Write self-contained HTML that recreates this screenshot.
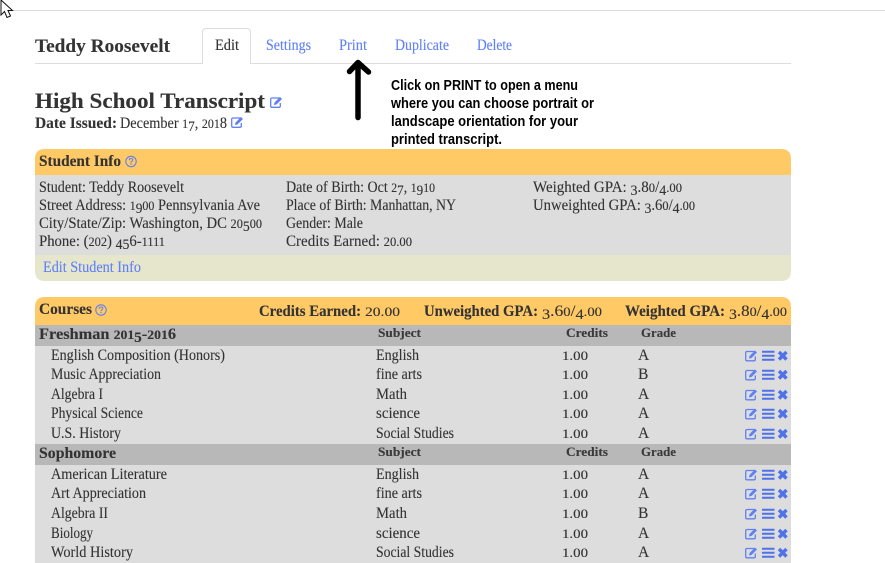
<!DOCTYPE html>
<html><head><meta charset="utf-8"><style>
html,body{margin:0;padding:0;background:#fff;width:885px;height:563px;overflow:hidden}
svg{display:block}
text{font-family:"Liberation Serif",serif;font-size:15.5px;fill:#333;stroke:#333;stroke-width:.12px}
.b{font-weight:bold}
.l{fill:#5f80fa;stroke:#5f80fa}
.h{font-size:13px;font-weight:bold;fill:#3a3a3a}
.t{font-family:"Liberation Sans",sans-serif;font-weight:bold;font-size:14.5px;fill:#000;stroke:none}
.s{font-size:13px}
.d{font-size:14.5px;baseline-shift:-3px}
</style></head><body>
<svg width="885" height="563" viewBox="0 0 885 563" xmlns="http://www.w3.org/2000/svg">
<defs>
<symbol id="e" viewBox="0 0 13 12" overflow="visible">
<path d="M9.500 2H2Q.7 2 .7 3.300V10Q.7 11.300 2 11.300H9Q10.300 11.300 10.300 10V7" fill="none" stroke="#6181f0" stroke-width="1.300"/>
<path d="M4.500 6.500L10 1L12 3L6.500 8.500L4 9Z" fill="#6181f0"/>
</symbol>
<symbol id="q" viewBox="0 0 12 12" overflow="visible">
<circle cx="6" cy="6" r="5.200" fill="none" stroke="#6181f0" stroke-width="1.100"/>
<path d="M4.200 4.700Q4.300 3 6 3Q7.900 3 7.800 4.500Q7.700 5.500 6.600 5.900Q6 6.200 6 7.300" fill="none" stroke="#6181f0" stroke-width="1.100"/>
<rect x="5.400" y="8" width="1.200" height="1.300" fill="#6181f0"/>
</symbol>
<g id="a">
<use href="#e" x="745" y="-5.500" width="13" height="12"/>
<path d="M762 -3.200H774.500M762 .8H774.500M762 4.800H774.500" stroke="#4f72e8" stroke-width="2"/>
<path d="M779 -3L786.500 4.500M786.500 -3L779 4.500" stroke="#4f72e8" stroke-width="3.400"/>
</g>
</defs>

<rect x="0" y="10" width="885" height="1" fill="#ddd"/>

<!-- cursor -->
<path d="M1 0V15L4.500 11.500L7 17.500L10.500 16L8 10.500H12.500Z" fill="#fff" stroke="#111" stroke-width="1"/>

<!-- tabs -->
<rect x="35" y="63" width="756" height="1" fill="#ddd"/>
<path d="M202.500 64V32Q202.500 28.500 206 28.500H247Q250.500 28.500 250.500 32V64" fill="#fff" stroke="#ddd"/>
<rect x="203" y="62" width="47" height="3" fill="#fff"/>
<text class="b" x="35" y="52" style="font-size:18.5px" textLength="135" lengthAdjust="spacingAndGlyphs">Teddy Roosevelt</text>
<text x="215" y="50" textLength="24" lengthAdjust="spacingAndGlyphs">Edit</text>
<text class="l" x="266" y="50" textLength="45" lengthAdjust="spacingAndGlyphs">Settings</text>
<text class="l" x="339" y="50" textLength="28" lengthAdjust="spacingAndGlyphs">Print</text>
<text class="l" x="395" y="50" textLength="54" lengthAdjust="spacingAndGlyphs">Duplicate</text>
<text class="l" x="477" y="50" textLength="35" lengthAdjust="spacingAndGlyphs">Delete</text>

<!-- arrow -->
<path d="M358 63V117.500M349.500 71.500L358 62.500L368.500 72" fill="none" stroke="#000" stroke-width="5.500" stroke-linecap="round" stroke-linejoin="round"/>

<!-- callout -->
<text class="t" x="391" y="90" textLength="187" lengthAdjust="spacingAndGlyphs">Click on PRINT to open a menu</text>
<text class="t" x="391" y="108" textLength="203" lengthAdjust="spacingAndGlyphs">where you can choose portrait or</text>
<text class="t" x="391" y="126" textLength="187" lengthAdjust="spacingAndGlyphs">landscape orientation for your</text>
<text class="t" x="391" y="144" textLength="111" lengthAdjust="spacingAndGlyphs">printed transcript.</text>

<!-- title -->
<text class="b" x="35" y="108" style="font-size:22.5px" textLength="230" lengthAdjust="spacingAndGlyphs">High School Transcript</text>
<use href="#e" x="270" y="96" width="13" height="12"/>
<text class="b" x="35" y="128" textLength="82" lengthAdjust="spacingAndGlyphs">Date Issued:</text>
<text x="120" y="128" textLength="107" lengthAdjust="spacingAndGlyphs">December <tspan class="s">1</tspan><tspan class="d">7</tspan>, <tspan class="s">201</tspan>8</text>
<use href="#e" x="231" y="116" width="13" height="12"/>

<!-- student info -->
<path d="M35 175V159Q35 149 45 149H781Q791 149 791 159V175Z" fill="#ffc966"/>
<rect x="35" y="175" width="756" height="80" fill="#ddd"/>
<path d="M35 255H791V271Q791 281 781 281H45Q35 281 35 271Z" fill="#e6e6cc"/>
<text class="b" x="39" y="166" textLength="82" lengthAdjust="spacingAndGlyphs">Student Info</text>
<use href="#q" x="125" y="155.500" width="12" height="12"/>
<text x="39" y="192" textLength="145" lengthAdjust="spacingAndGlyphs">Student: Teddy Roosevelt</text>
<text x="39" y="210" textLength="221" lengthAdjust="spacingAndGlyphs">Street Address: <tspan class="s">1</tspan><tspan class="d">9</tspan><tspan class="s">00</tspan> Pennsylvania Ave</text>
<text x="39" y="228" textLength="223" lengthAdjust="spacingAndGlyphs">City/State/Zip: Washington, DC <tspan class="s">20</tspan><tspan class="d">5</tspan><tspan class="s">00</tspan></text>
<text x="39" y="246" textLength="126" lengthAdjust="spacingAndGlyphs">Phone: (<tspan class="s">202</tspan>) <tspan class="d">45</tspan>6-<tspan class="s">1111</tspan></text>
<text x="286" y="192" textLength="149" lengthAdjust="spacingAndGlyphs">Date of Birth: Oct <tspan class="s">2</tspan><tspan class="d">7</tspan>, <tspan class="s">1</tspan><tspan class="d">9</tspan><tspan class="s">10</tspan></text>
<text x="286" y="210" textLength="170" lengthAdjust="spacingAndGlyphs">Place of Birth: Manhattan, NY</text>
<text x="286" y="228" textLength="77" lengthAdjust="spacingAndGlyphs">Gender: Male</text>
<text x="286" y="246" textLength="126" lengthAdjust="spacingAndGlyphs">Credits Earned: <tspan class="s">20.00</tspan></text>
<text x="533" y="192" textLength="149" lengthAdjust="spacingAndGlyphs">Weighted GPA: <tspan class="d">3</tspan>.8<tspan class="s">0</tspan>/<tspan class="d">4</tspan><tspan class="s">.00</tspan></text>
<text x="533" y="210" textLength="162" lengthAdjust="spacingAndGlyphs">Unweighted GPA: <tspan class="d">3</tspan>.6<tspan class="s">0</tspan>/<tspan class="d">4</tspan><tspan class="s">.00</tspan></text>
<text class="l" x="43" y="272" textLength="98" lengthAdjust="spacingAndGlyphs">Edit Student Info</text>

<!-- courses -->
<path d="M35 325V307Q35 297 45 297H781Q791 297 791 307V325Z" fill="#ffc966"/>
<rect x="35" y="325" width="756" height="238" fill="#ddd"/>
<rect x="35" y="325" width="756" height="21" fill="#b8b8b8"/>
<rect x="35" y="444" width="756" height="21" fill="#b8b8b8"/>
<text class="b" x="39" y="314" textLength="53" lengthAdjust="spacingAndGlyphs">Courses</text>
<use href="#q" x="95" y="304" width="12" height="12"/>
<text class="b" x="259" y="316" textLength="102" lengthAdjust="spacingAndGlyphs">Credits Earned:</text>
<text x="365" y="316" textLength="35" lengthAdjust="spacingAndGlyphs"><tspan class="s">20.00</tspan></text>
<text class="b" x="424" y="316" textLength="114" lengthAdjust="spacingAndGlyphs">Unweighted GPA:</text>
<text x="542" y="316" textLength="60" lengthAdjust="spacingAndGlyphs"><tspan class="d">3</tspan>.6<tspan class="s">0</tspan>/<tspan class="d">4</tspan><tspan class="s">.00</tspan></text>
<text class="b" x="625" y="316" textLength="100" lengthAdjust="spacingAndGlyphs">Weighted GPA:</text>
<text x="729" y="316" textLength="58" lengthAdjust="spacingAndGlyphs"><tspan class="d">3</tspan>.8<tspan class="s">0</tspan>/<tspan class="d">4</tspan><tspan class="s">.00</tspan></text>

<text class="b" x="39" y="339" textLength="137" lengthAdjust="spacingAndGlyphs">Freshman <tspan class="s">201</tspan><tspan class="d">5</tspan>-<tspan class="s">201</tspan>6</text>
<text class="h" x="378" y="337" textLength="43" lengthAdjust="spacingAndGlyphs">Subject</text>
<text class="h" x="566" y="337" textLength="42" lengthAdjust="spacingAndGlyphs">Credits</text>
<text class="h" x="641" y="337" textLength="35" lengthAdjust="spacingAndGlyphs">Grade</text>

<text x="51" y="360" textLength="174" lengthAdjust="spacingAndGlyphs">English Composition (Honors)</text>
<text x="376" y="360" textLength="43" lengthAdjust="spacingAndGlyphs">English</text>
<text class="s" x="562" y="360" textLength="26" lengthAdjust="spacingAndGlyphs">1.00</text>
<text x="638" y="360">A</text>
<use href="#a" y="355"/>

<text x="51" y="379" textLength="110" lengthAdjust="spacingAndGlyphs">Music Appreciation</text>
<text x="376" y="379" textLength="46" lengthAdjust="spacingAndGlyphs">fine arts</text>
<text class="s" x="562" y="379" textLength="26" lengthAdjust="spacingAndGlyphs">1.00</text>
<text x="638" y="379">B</text>
<use href="#a" y="374"/>

<text x="51" y="399" textLength="52" lengthAdjust="spacingAndGlyphs">Algebra I</text>
<text x="376" y="399" textLength="31" lengthAdjust="spacingAndGlyphs">Math</text>
<text class="s" x="562" y="399" textLength="26" lengthAdjust="spacingAndGlyphs">1.00</text>
<text x="638" y="399">A</text>
<use href="#a" y="394"/>

<text x="51" y="418" textLength="92" lengthAdjust="spacingAndGlyphs">Physical Science</text>
<text x="376" y="418" textLength="44" lengthAdjust="spacingAndGlyphs">science</text>
<text class="s" x="562" y="418" textLength="26" lengthAdjust="spacingAndGlyphs">1.00</text>
<text x="638" y="418">A</text>
<use href="#a" y="413"/>

<text x="51" y="438" textLength="70" lengthAdjust="spacingAndGlyphs">U.S. History</text>
<text x="376" y="438" textLength="78" lengthAdjust="spacingAndGlyphs">Social Studies</text>
<text class="s" x="562" y="438" textLength="26" lengthAdjust="spacingAndGlyphs">1.00</text>
<text x="638" y="438">A</text>
<use href="#a" y="433"/>

<text class="b" x="39" y="458" textLength="77" lengthAdjust="spacingAndGlyphs">Sophomore</text>
<text class="h" x="378" y="456" textLength="43" lengthAdjust="spacingAndGlyphs">Subject</text>
<text class="h" x="566" y="456" textLength="42" lengthAdjust="spacingAndGlyphs">Credits</text>
<text class="h" x="641" y="456" textLength="35" lengthAdjust="spacingAndGlyphs">Grade</text>

<text x="51" y="479" textLength="116" lengthAdjust="spacingAndGlyphs">American Literature</text>
<text x="376" y="479" textLength="43" lengthAdjust="spacingAndGlyphs">English</text>
<text class="s" x="562" y="479" textLength="26" lengthAdjust="spacingAndGlyphs">1.00</text>
<text x="638" y="479">A</text>
<use href="#a" y="474"/>

<text x="51" y="498" textLength="95" lengthAdjust="spacingAndGlyphs">Art Appreciation</text>
<text x="376" y="498" textLength="46" lengthAdjust="spacingAndGlyphs">fine arts</text>
<text class="s" x="562" y="498" textLength="26" lengthAdjust="spacingAndGlyphs">1.00</text>
<text x="638" y="498">A</text>
<use href="#a" y="493"/>

<text x="51" y="518" textLength="57" lengthAdjust="spacingAndGlyphs">Algebra II</text>
<text x="376" y="518" textLength="31" lengthAdjust="spacingAndGlyphs">Math</text>
<text class="s" x="562" y="518" textLength="26" lengthAdjust="spacingAndGlyphs">1.00</text>
<text x="638" y="518">B</text>
<use href="#a" y="513"/>

<text x="51" y="538" textLength="42" lengthAdjust="spacingAndGlyphs">Biology</text>
<text x="376" y="538" textLength="44" lengthAdjust="spacingAndGlyphs">science</text>
<text class="s" x="562" y="538" textLength="26" lengthAdjust="spacingAndGlyphs">1.00</text>
<text x="638" y="538">A</text>
<use href="#a" y="533"/>

<text x="51" y="557" textLength="82" lengthAdjust="spacingAndGlyphs">World History</text>
<text x="376" y="557" textLength="78" lengthAdjust="spacingAndGlyphs">Social Studies</text>
<text class="s" x="562" y="557" textLength="26" lengthAdjust="spacingAndGlyphs">1.00</text>
<text x="638" y="557">A</text>
<use href="#a" y="552"/>
</svg>
</body></html>
